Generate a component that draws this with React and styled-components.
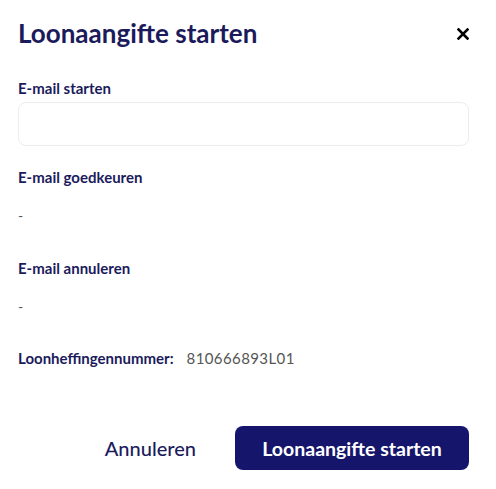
import React from 'react'
import styled, { createGlobalStyle } from 'styled-components'

const GlobalStyle = createGlobalStyle`
  body {
    margin: 0;
    background: #fff;
    font-family: Lato, "Noto Sans", sans-serif;
  }
`

const fields = [
  { label: 'E-mail goedkeuren', value: '-' },
  { label: 'E-mail annuleren', value: '-' },
]

function App() {
  return (
    <>
      <GlobalStyle />
      <Modal>
        <Header>
          <Title>Loonaangifte starten</Title>
          <CloseButton aria-label="Sluiten">
            <svg width="12" height="12" viewBox="0 0 12 12">
              <path d="M1.5 1.5 L10.5 10.5 M10.5 1.5 L1.5 10.5" stroke="#000" strokeWidth="2.6" strokeLinecap="square" />
            </svg>
          </CloseButton>
        </Header>

        <Field>
          <Label>E-mail starten</Label>
          <Input type="text" />
        </Field>

        {fields.map((f) => (
          <Field key={f.label}>
            <Label>{f.label}</Label>
            <Value>{f.value}</Value>
          </Field>
        ))}

        <InlineRow>
          <Label>Loonheffingennummer:</Label>
          <InlineValue>810666893L01</InlineValue>
        </InlineRow>

        <Footer>
          <GhostButton>Annuleren</GhostButton>
          <PrimaryButton>Loonaangifte starten</PrimaryButton>
        </Footer>
      </Modal>
    </>
  )
}

export default App

const Modal = styled.div`
  width: 496px;
  height: 489px;
  box-sizing: border-box;
  padding: 16px 27px 0 18px;
  display: flex;
  flex-direction: column;
`
const Header = styled.div`
  display: flex;
  align-items: center;
  justify-content: space-between;
  height: 34px;
  margin-bottom: 29px;
`
const Title = styled.h1`
  margin: 0;
  font-size: 26px;
  font-weight: 700;
  color: #1b1b5c;
`
const CloseButton = styled.button`
  border: none;
  background: none;
  padding: 0;
  margin-top: 2px;
  display: flex;
  cursor: pointer;
`
const Field = styled.div`
  display: flex;
  flex-direction: column;
  margin-bottom: 22px;
`
const Label = styled.span`
  font-size: 15px;
  font-weight: 700;
  color: #1b1b5c;
  line-height: 18px;
`
const Input = styled.input`
  margin-top: 5px;
  height: 44px;
  box-sizing: border-box;
  border: 1px solid #ececec;
  border-radius: 8px;
  outline: none;
  padding: 0 12px;
  font: inherit;
`
const Value = styled.span`
  margin-top: 21px;
  font-size: 14px;
  color: #555;
  line-height: 18px;
  height: 30px;
`
const InlineRow = styled.div`
  display: flex;
  align-items: baseline;
  gap: 13px;
  margin-top: -1px;
`
const InlineValue = styled.span`
  font-size: 15px;
  color: #555;
  letter-spacing: 0.4px;
`
const Footer = styled.div`
  display: flex;
  justify-content: flex-end;
  align-items: center;
  gap: 39px;
  margin-top: 59px;
`
const GhostButton = styled.button`
  border: none;
  background: none;
  font-family: inherit;
  font-size: 20px;
  font-weight: 500;
  color: #1b1b5c;
  padding: 0;
  cursor: pointer;
`
const PrimaryButton = styled.button`
  border: none;
  background: #15166b;
  color: #fff;
  font-family: inherit;
  font-size: 19.5px;
  font-weight: 700;
  height: 44px;
  width: 234px;
  border-radius: 8px;
  cursor: pointer;
`
